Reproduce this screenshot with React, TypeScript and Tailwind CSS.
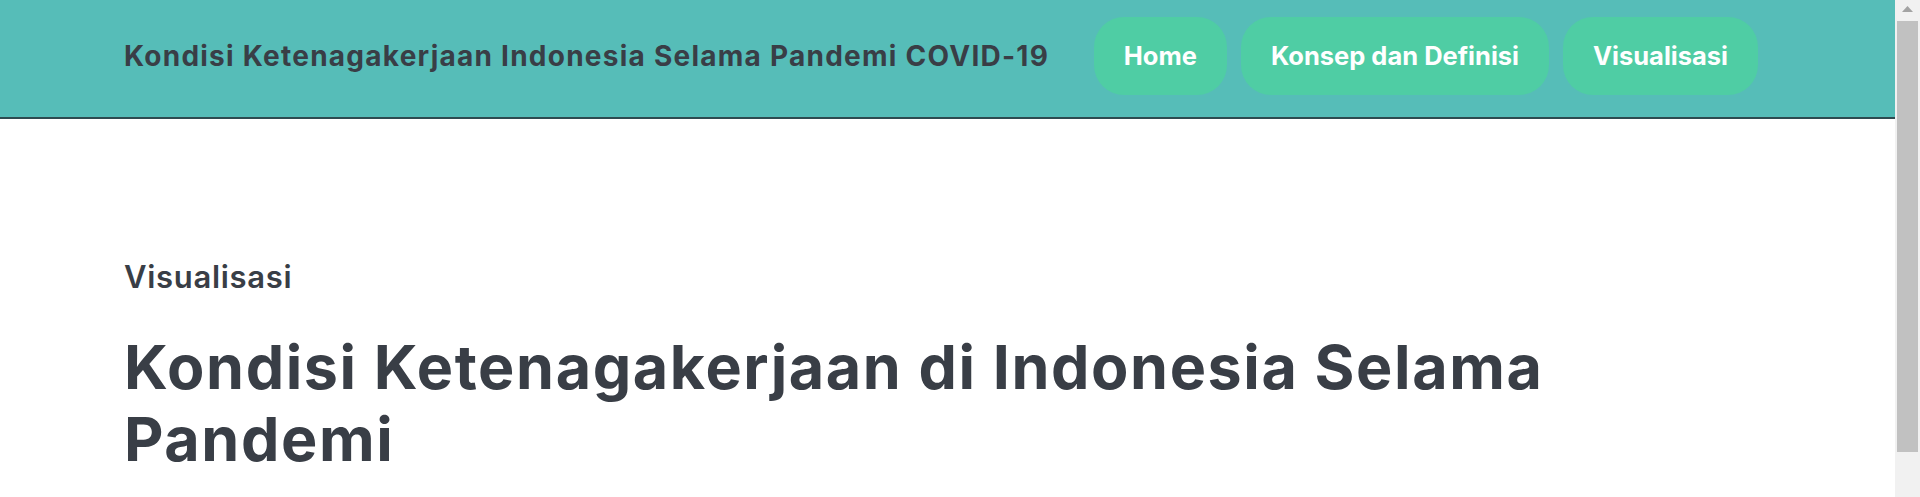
const navItems = ['Home', 'Konsep dan Definisi', 'Visualisasi'];

function ScrollTrack() {
  return (
    <aside className="flex w-[25px] shrink-0 flex-col bg-[#f1f1f1]">
      <div className="flex h-[20px] items-start justify-center pt-[6px]">
        <svg width="11" height="6" viewBox="0 0 11 6">
          <path d="M5.5 0L11 6H0z" fill="#a3a3a3" />
        </svg>
      </div>
      <div className="mx-[2px] mt-[1px] h-[431px] bg-[#c1c1c1]" />
    </aside>
  );
}

export default function App() {
  return (
    <div className="flex h-screen overflow-hidden bg-white font-['Inter',_'Noto_Sans',_sans-serif] text-[#393e46]">
      <div className="min-w-0 flex-1">
        {/* Header */}
        <header className="flex h-[119px] items-center justify-between border-b-2 border-[#2d4b50] bg-[#56bdb8] pb-[5px] pl-[124px] pr-[137px]">
          <h1 className="text-[28px] font-bold tracking-[1.25px] text-[#393e46]">
            Kondisi Ketenagakerjaan Indonesia Selama Pandemi COVID-19
          </h1>
          <nav className="flex gap-[14px]">
            {navItems.map((item) => (
              <a
                key={item}
                href="#"
                className="flex h-[78px] items-center rounded-[30px] bg-[#4fcda4] px-[30px] text-[25.5px] font-bold text-white"
              >
                {item}
              </a>
            ))}
          </nav>
        </header>

        {/* Content */}
        <main className="pb-[49px] pl-[124px] pt-[138px]">
          <h3 className="text-[31px] font-semibold leading-[40px] tracking-[0.7px]">Visualisasi</h3>
          <h2 className="mt-[34px] max-w-[1580px] text-[61px] font-bold leading-[72px] tracking-[1.6px]">
            Kondisi Ketenagakerjaan di Indonesia Selama Pandemi
          </h2>
        </main>
      </div>
      <ScrollTrack />
    </div>
  );
}
